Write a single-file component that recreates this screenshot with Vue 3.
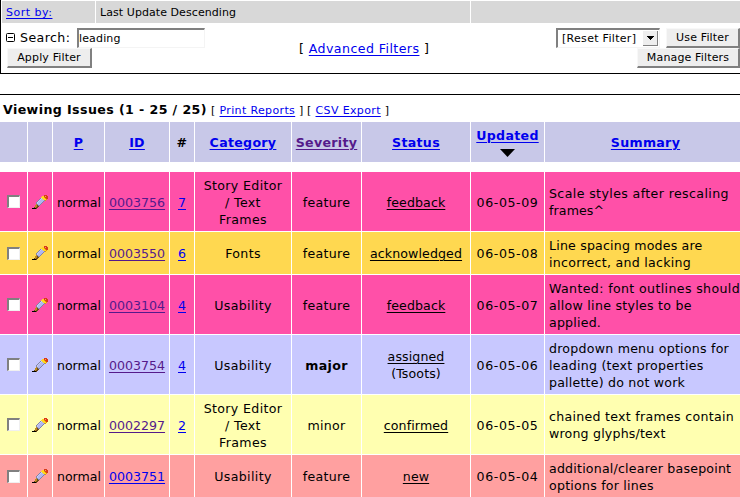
<script setup>
const headers = [
  { text: '' },
  { text: '' },
  { text: 'P', link: true },
  { text: 'ID', link: true },
  { text: '#' },
  { text: 'Category', link: true },
  { text: 'Severity', link: true, visited: true },
  { text: 'Status', link: true },
  { text: 'Updated', link: true, sorted: true },
  { text: 'Summary', link: true },
]

// Each summary line carries its own tracking, in pixels.
const rows = [
  { id: '0003756', visited: true, notes: '7', category: ['Story Editor', '/ Text', 'Frames'], severity: 'feature', status: 'feedback', date: '06-05-09', summary: [['Scale styles after rescaling', 0.38], ['frames^', 0.1]] },
  { id: '0003550', visited: true, notes: '6', category: ['Fonts'], severity: 'feature', status: 'acknowledged', date: '06-05-08', summary: [['Line spacing modes are', 0.18], ['incorrect, and lacking', 0.27]] },
  { id: '0003104', visited: true, notes: '4', category: ['Usability'], severity: 'feature', status: 'feedback', date: '06-05-07', summary: [['Wanted: font outlines should', 0.36], ['allow line styles to be', 0.27], ['applied.', 0.2]] },
  { id: '0003754', visited: true, notes: '4', category: ['Usability'], severity: 'major', status: 'assigned', owner: '(Tsoots)', date: '06-05-06', summary: [['dropdown menu options for', 0.23], ['leading (text properties', 0.25], ['pallette) do not work', 0.2]] },
  { id: '0002297', visited: true, notes: '2', category: ['Story Editor', '/ Text', 'Frames'], severity: 'minor', status: 'confirmed', date: '06-05-05', summary: [['chained text frames contain', 0.28], ['wrong glyphs/text', 0.18]] },
  { id: '0003751', visited: false, notes: '', category: ['Usability'], severity: 'feature', status: 'new', date: '06-05-04', summary: [['additional/clearer basepoint', 0.2], ['options for lines', 0.22]] },
]

// Pencil icon, one character per pixel.
const palette = { k: '#000000', b: '#6b4a18', t: '#c08a20', g: '#8084a8', l: '#c8ccf4', m: '#b0b6f0', o: '#e89a00', y: '#ffd820', r: '#d83c18', p: '#ff9070' }
const pencil = [
  '............rrr.',
  '..........yyrprr',
  '.........yyyorrr',
  '........glyyyorr',
  '.......glmmyyyo.',
  '......glmmmmgo..',
  '.....glmmmmg....',
  '....glmmmmg.....',
  '....glmmmg......',
  '....tgmmg.......',
  '...ttbgg........',
  '...ttbb.........',
  '..btbb..........',
  'kkkkb...........',
].flatMap((line, y) => [...line].map((c, x) => ({ x, y, fill: palette[c] }))).filter((p) => p.fill)
</script>

<template>
  <main class="page">
    <section class="filter">
      <div class="sort">
        <div><a href="#">Sort by:</a></div>
        <div>Last Update Descending</div>
        <div></div>
      </div>
      <div class="controls">
        <div class="search">
          <div class="line">
            <svg class="toggle" width="9" height="9" viewBox="0 0 9 9"><rect x=".5" y=".5" width="8" height="8" rx="1" fill="#fff" stroke="#000" /><path d="M2 4.5h5" stroke="#000" /></svg>
            <span class="label">Search:</span>
            <span class="field">leading</span>
          </div>
          <button class="apply">Apply Filter</button>
        </div>
        <div class="advanced">[ <a href="#">Advanced Filters</a> ]</div>
        <div class="saved">
          <div class="line">
            <span class="select">[Reset Filter]<i><svg width="7" height="4" viewBox="0 0 7 4" shape-rendering="crispEdges"><path d="M0 0h7v1H6v1H5v1H4v1H3V3H2V2H1V1H0z" /></svg></i></span>
            <button class="use">Use Filter</button>
          </div>
          <button class="manage">Manage Filters</button>
        </div>
      </div>
    </section>

    <section class="issues">
      <div class="title">
        <b>Viewing Issues (1 - 25 / 25)</b>
        <span class="tool">[ <a href="#">Print Reports</a> ]</span>
        <span class="tool">[ <a href="#">CSV Export</a> ]</span>
      </div>
      <div class="grid head">
        <div v-for="(h, i) in headers" :key="i">
          <a v-if="h.link" href="#" :class="{ visited: h.visited }">{{ h.text }}</a>
          <span v-else>{{ h.text }}</span>
          <svg v-if="h.sorted" class="arrow" width="15" height="8" viewBox="0 0 15 8"><path d="M0 0h15L7.5 8z" /></svg>
        </div>
      </div>
      <div v-for="r in rows" :key="r.id" class="grid row" :class="r.status">
        <div><span class="box"></span></div>
        <div>
          <svg width="16" height="14" viewBox="0 0 16 14" shape-rendering="crispEdges">
            <rect v-for="p in pencil" :key="p.x + '-' + p.y" :x="p.x" :y="p.y" width="1" height="1" :fill="p.fill" />
          </svg>
        </div>
        <div class="txt priority">normal</div>
        <div class="txt"><a href="#" :class="{ visited: r.visited }">{{ r.id }}</a></div>
        <div class="txt"><a v-if="r.notes" href="#">{{ r.notes }}</a></div>
        <div class="txt category"><span v-for="c in r.category" :key="c">{{ c }}</span></div>
        <div class="txt severity" :class="{ bold: r.severity === 'major' }">{{ r.severity }}</div>
        <div class="txt status"><u>{{ r.status }}</u><span v-if="r.owner">{{ r.owner }}</span></div>
        <div class="txt date">{{ r.date }}</div>
        <div class="txt summary"><span v-for="[s, tracking] in r.summary" :key="s" :style="{ letterSpacing: tracking + 'px' }">{{ s }}</span></div>
      </div>
    </section>
  </main>
</template>

<style>
body { margin: 0; background: #fff; overflow: hidden; }
</style>

<style scoped>
* { box-sizing: border-box; }
.page { width: 740px; height: 497px; overflow: hidden; font: 12.6px/17px "DejaVu Sans", sans-serif; color: #000; }
a { color: #0000ee; text-decoration: underline; text-underline-offset: 2px; text-decoration-thickness: 1px; }
a.visited { color: #551a8b; }
u { text-underline-offset: 2px; text-decoration-thickness: 1px; }
.filter { height: 74px; border-left: 1px solid #000; border-bottom: 1px solid #000; padding-top: 1px; }
.sort { display: grid; grid-template-columns: 93px 374px 1fr; grid-template-rows: 22px; gap: 1px; height: 22px; padding-left: 1px; font-size: 11px; line-height: 23px; letter-spacing: 0.07px; }
.sort > div { background: #d8d8d8; padding-left: 4px; }
.sort > div:first-child { letter-spacing: 0.5px; }
.controls { display: grid; grid-template-columns: 240px 1fr 240px; height: 50px; padding-top: 5px; }
.line { display: flex; height: 20px; }
.search { padding-left: 5px; }
.toggle { margin: 5px 5px 0 0; }
.label { width: 57px; line-height: 19px; letter-spacing: 0.4px; }
.field { width: 128px; height: 20px; border: 2px solid #808080; border-right: 1px solid #f4f4f4; border-bottom: 1px solid #f4f4f4; font-size: 11px; line-height: 17px; letter-spacing: 0.15px; }
button { display: block; height: 20px; padding: 1px 0 0; border: 1px solid #f8f8f8; border-right: 2px solid #808080; border-bottom: 2px solid #808080; background: #eeeeee; color: #000; font: 11px/16px "DejaVu Sans", sans-serif; letter-spacing: 0.15px; white-space: nowrap; }
.apply { width: 85px; margin-left: 1px; }
.advanced { padding: 12px 0 0 58px; white-space: nowrap; letter-spacing: 0.42px; }
.saved { display: flex; flex-direction: column; align-items: flex-end; }
.select { display: flex; justify-content: space-between; width: 104px; height: 20px; padding-left: 4px; border: 2px solid #808080; border-right: 1px solid #f4f4f4; border-bottom: 1px solid #f4f4f4; font-size: 11px; line-height: 17px; letter-spacing: 0.3px; white-space: nowrap; }
.select i { display: flex; align-items: center; justify-content: center; width: 15px; height: 15px; margin: 1px 1px 0 0; background: #eee; border-right: 1px solid #808080; border-bottom: 1px solid #808080; }
.use { width: 74px; margin-left: 6px; }
.manage { width: 103px; }
.issues { margin-top: 20px; border-top: 1px solid #000; }
.title { display: flex; height: 27px; padding: 6px 0 0 3px; white-space: nowrap; }
.title b { width: 208px; letter-spacing: 0.41px; }
.tool { font-size: 11px; width: 96px; padding-top: 1px; letter-spacing: 0.36px; }
.grid { display: grid; grid-template-columns: 27px 24px 51px 64px 24px 96px 69px 108px 73px 195px; column-gap: 1px; }
.head { height: 40px; margin-bottom: 10px; font-weight: bold; letter-spacing: 0.3px; }
.head > div { background: #c8c8e8; display: flex; flex-direction: column; align-items: center; justify-content: center; }
.head > div:last-child { padding-left: 6px; }
.arrow { margin-top: 5px; }
.row { height: 59px; margin-bottom: 1px; }
.row > div { background: var(--tone); display: flex; flex-direction: column; align-items: center; justify-content: center; white-space: nowrap; }
.row .txt { padding-top: 1px; }
.row .priority { padding-left: 1px; }
.row .category { letter-spacing: 0.35px; }
.row .severity { letter-spacing: 0.3px; }
.row .status { letter-spacing: 0.1px; }
.row .date { letter-spacing: 0.6px; }
.row .summary { align-items: flex-start; padding-left: 4px; }
.row.feedback { --tone: #ff50a8; }
.row.acknowledged { --tone: #ffd850; height: 42px; }
.row.assigned { --tone: #c8c8ff; }
.row.confirmed { --tone: #ffffb0; }
.row.new { --tone: #ffa0a0; height: 42px; }
.bold { font-weight: bold; }
.box { width: 13px; height: 13px; background: #fff; border: 2px solid #808080; border-right: 1px solid #f0f0f0; border-bottom: 1px solid #f0f0f0; }
</style>
